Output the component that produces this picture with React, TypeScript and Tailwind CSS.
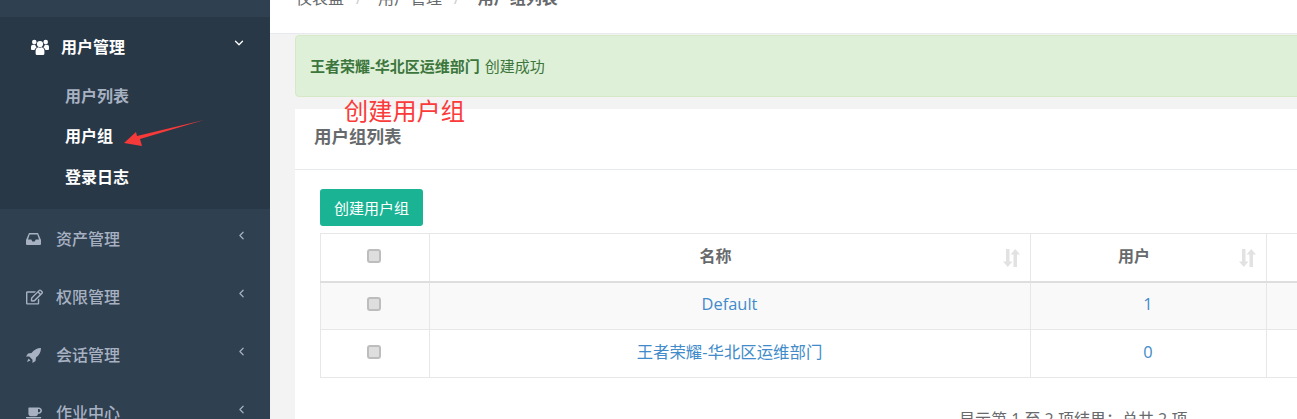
import React from "react";
import { FaRegEdit, FaCoffee } from "react-icons/fa";
import { LuChevronDown, LuChevronLeft } from "react-icons/lu";

const font = { fontFamily: '"Open Sans", "Noto Sans CJK SC", sans-serif' };

function UsersIcon() {
  return (
    <svg viewBox="0 0 18 16" className="w-[18px] h-[16px] mr-[12px]" fill="currentColor">
      <circle cx="9" cy="5" r="3.1" />
      <path d="M4.600 14.500V12a3.700 3.700 0 0 1 3-3.700c.9.600 1.900.600 2.800 0a3.700 3.700 0 0 1 3 3.700v2.500q0 1.500-1.500 1.500h-5.800q-1.500 0-1.500-1.500z" />
      <circle cx="3.300" cy="3" r="2.300" />
      <circle cx="14.700" cy="3" r="2.300" />
      <path d="M0 10V7.800a2 2 0 0 1 2-2h2.200q.4 1.700 1.500 2.400A5 5 0 0 0 3.500 11H1q-1 0-1-1z" />
      <path d="M18 10V7.800a2 2 0 0 0-2-2h-2.200q-.4 1.700-1.500 2.400a5 5 0 0 1 2.200 2.800H17q1 0 1-1z" />
    </svg>
  );
}

function InboxIcon() {
  return (
    <svg viewBox="0 0 15 12" className="w-[15px] h-[12px]" fill="currentColor" fillRule="evenodd">
      <path d="M3 0h9l3 7v4q0 1-1 1H1q-1 0-1-1V7zM3.700 1.500 2 6.500h3.300l1 2h2.400l1-2H13l-1.700-5z" />
    </svg>
  );
}

function RocketIcon() {
  return (
    <svg viewBox="0 0 15 15" className="w-[15px] h-[15px]" fill="currentColor">
      <path d="M15 0C11 0 7.500 2 5.500 5L2 5.500 0 8.500h3.300l3.200 3.200V15l3-2 .5-3.500C13 7.500 15 4 15 0z" />
      <path d="M2.500 10.500 4.500 12.500 1 14z" />
    </svg>
  );
}

function NavItem({ icon, label }: { icon: React.ReactNode; label: string }) {
  return (
    <div className="h-[58px] shrink-0 flex items-center pl-[26px] pr-[22px] text-[#a7b1c2] text-[16px] font-medium">
      <span className="w-[30px] flex items-center">{icon}</span>
      <span className="flex-1">{label}</span>
      <LuChevronLeft className="w-[13px] h-[13px] -mt-2" strokeWidth={2.2} />
    </div>
  );
}

function SortIcon() {
  return (
    <svg viewBox="0 0 17 18" className="w-[17px] h-[18px] absolute right-[10px] top-[15px]" fill="#e2e2e2">
      <path d="M3 0h3.500v12.500H9.500L4.750 18 0 12.500h3z" />
      <path d="M10.500 18H14V5.500h3L12.250 0 7.500 5.500h3z" />
    </svg>
  );
}

function Check({ className }: { className: string }) {
  return <span className={"block ml-[46px] w-[14px] h-[14px] rounded-[3px] bg-[#dedede] border-2 border-[#bdbdbd] " + className} />;
}

const th = "border border-[#e7e7e7] border-b-[2px] border-b-[#dedede] h-[48px] text-[16px] font-bold text-[#676a6c] text-center relative p-0 pb-[2px]";
const tdCheck = "border border-[#e7e7e7] h-[48px] p-0 pb-[4px]";
const td = "border border-[#e7e7e7] h-[48px] text-[16.400px] text-center text-[#428bca] p-0 pb-[2px]";

export default function App() {
  return (
    <div className="w-[1297px] h-[419px] overflow-hidden flex bg-[#f3f3f4] relative" style={font}>
      <aside className="w-[270px] shrink-0 bg-[#2f4050] flex flex-col overflow-hidden">
        <div className="h-[17px] shrink-0" />
        <div className="h-[192px] shrink-0 bg-[#293846] pt-[6px]">
          <div className="h-[48px] flex items-center pl-[31px] pr-[24px] text-white text-[16px] font-semibold">
            <UsersIcon />
            <span className="flex-1">用户管理</span>
            <LuChevronDown className="w-[14px] h-[14px] -mt-2" strokeWidth={2.2} />
          </div>
          <div className="pl-[65px] pt-[5px] text-[16px] font-semibold">
            <div className="h-[40px] flex items-center text-[#a7b1c2]">用户列表</div>
            <div className="h-[40px] flex items-center text-white">用户组</div>
            <div className="h-[42px] flex items-center text-white">登录日志</div>
          </div>
        </div>
        <div className="h-[1px] shrink-0" />
        <NavItem icon={<InboxIcon />} label="资产管理" />
        <NavItem icon={<FaRegEdit className="w-[17px] h-[16px]" />} label="权限管理" />
        <NavItem icon={<RocketIcon />} label="会话管理" />
        <NavItem icon={<FaCoffee className="w-[16px] h-[16px]" />} label="作业中心" />
      </aside>

      <main className="flex-1 min-w-0 flex flex-col">
        <div className="h-[34px] shrink-0 bg-white border-b border-[#e7eaec] overflow-hidden pl-[26px] text-[16px] text-[#676a6c]">
          <div className="-mt-[14px] flex items-center gap-[12px] leading-[24px]">
            <span>仪表盘</span><span className="text-[#ccc]">/</span>
            <span className="ml-[4px]">用户管理</span><span className="text-[#ccc]">/</span>
            <span className="ml-[6px] font-bold">用户组列表</span>
          </div>
        </div>

        <div className="ml-[25px] w-[1100px] flex flex-col">
          <div className="mt-[1px] h-[62px] rounded-l-[4px] bg-[#dff0d8] border border-[#d6e9c6] flex items-center pl-[14px] text-[15px] text-[#3c763d]">
            <span className="font-bold">王者荣耀-华北区运维部门</span>
            <span className="ml-[5px]">创建成功</span>
          </div>

          <div className="mt-[12px] bg-white flex flex-col">
            <div className="h-[61px] border-b border-[#e7eaec] flex items-center pl-[19px] pb-[6px] text-[17.500px] font-bold text-[#676a6c]">用户组列表</div>
            <div className="pl-[25px] pt-[19px]">
              <button className="w-[103px] h-[37px] rounded-[3px] bg-[#1ab394] text-white text-[15px] flex items-center justify-center pt-[1px]">创建用户组</button>
              <table className="mt-[7px] w-[1060px] table-fixed border-collapse">
                <colgroup>
                  <col className="w-[108.500px]" />
                  <col className="w-[601px]" />
                  <col className="w-[236px]" />
                  <col />
                </colgroup>
                <thead>
                  <tr>
                    <th className={th}><Check className="-mt-[1px]" /></th>
                    <th className={th + " pr-[28px]"}>名称<SortIcon /></th>
                    <th className={th + " pr-[28px]"}>用户<SortIcon /></th>
                    <th className={th} />
                  </tr>
                </thead>
                <tbody>
                  <tr className="bg-[#f9f9f9]">
                    <td className={tdCheck}><Check className="" /></td>
                    <td className={td}>Default</td>
                    <td className={td}>1</td>
                    <td className={td} />
                  </tr>
                  <tr>
                    <td className={tdCheck}><Check className="" /></td>
                    <td className={td}>王者荣耀-华北区运维部门</td>
                    <td className={td}>0</td>
                    <td className={td} />
                  </tr>
                </tbody>
              </table>
              <div className="mt-[29px] ml-[639px] text-[16px] leading-[24px] text-[#676a6c] whitespace-nowrap">显示第 1 至 2 项结果：总共 2 项</div>
            </div>
          </div>
        </div>
      </main>

      <div className="absolute left-[344px] top-[94px] text-[24.200px] leading-[34px] text-[#fb3a3a] whitespace-nowrap">创建用户组</div>
      <svg className="absolute left-[120px] top-[117px]" width="90" height="32" viewBox="0 0 90 32">
        <path d="M84 3 L20 22 L22 29 L4 26 L16 15 L17 19 Z" fill="#f63a3a" />
      </svg>
    </div>
  );
}
